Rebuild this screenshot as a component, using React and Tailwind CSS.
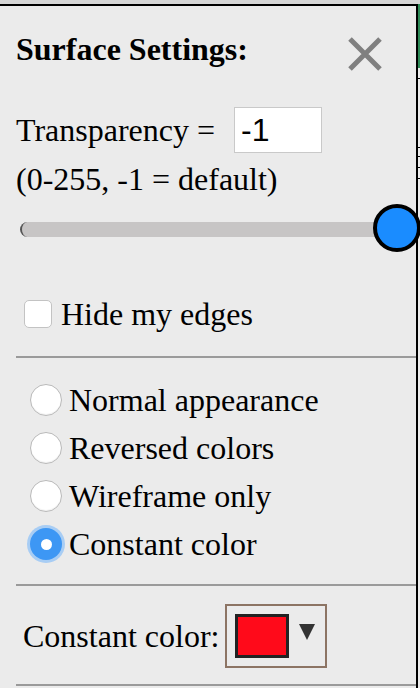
import React, { useState } from 'react';

const serif = { fontFamily: '"Liberation Serif", "Times New Roman", serif' };

const Radio = ({ label, checked, onChange }) => (
  <label className="flex h-[48px] items-center cursor-pointer">
    {checked ? (
      <span className="ml-[11px] flex h-[38px] w-[38px] items-center justify-center rounded-full bg-[#a8cdf4]">
        <span className="flex h-[32px] w-[32px] items-center justify-center rounded-full bg-[#3d97f4]">
          <span className="h-[11px] w-[11px] rounded-full bg-white" />
        </span>
      </span>
    ) : (
      <span className="ml-[14px] mr-[3px] h-[32px] w-[32px] rounded-full border border-[#b9b9b9] bg-white shadow-[inset_0_-1px_1px_rgba(0,0,0,0.06)]" />
    )}
    <input type="radio" className="hidden" checked={checked} onChange={onChange} />
    <span className="ml-[4px] text-[32px] leading-[48px] text-black">{label}</span>
  </label>
);

export default function App() {
  const [mode, setMode] = useState('constant');
  const [hideEdges, setHideEdges] = useState(false);
  const modes = [
    ['normal', 'Normal appearance'],
    ['reversed', 'Reversed colors'],
    ['wireframe', 'Wireframe only'],
    ['constant', 'Constant color'],
  ];

  return (
    <div className="w-[420px] h-[688px] overflow-hidden bg-[#d6d6d6] flex flex-col" style={serif}>
      <div className="h-[4px] shrink-0" />
      <div className="flex flex-1">
        {/* panel */}
        <div className="w-[418px] border-t-2 border-r-2 border-black bg-[#ebebeb] pl-[16px] flex flex-col">
          <div className="mt-[23px] flex h-[40px] items-start justify-between pr-[33px]">
            <h1 className="text-[32px] font-bold leading-[40px] text-black">Surface Settings:</h1>
            <svg width="36" height="36" viewBox="0 0 36 36" className="mt-[7px]">
              <path d="M3 3 L33 33 M33 3 L3 33" stroke="#808080" strokeWidth="5" />
            </svg>
          </div>

          <div className="mt-[38px] flex h-[46px] items-center">
            <span className="text-[32px] leading-[40px] text-black">Transparency =</span>
            <input
              defaultValue="-1"
              className="ml-[19px] h-[46px] w-[88px] border border-[#c9c9c9] bg-white pl-[6px] text-[32px] text-black outline-none"
              style={{ fontFamily: '"Liberation Sans", Arial, sans-serif' }}
            />
          </div>
          <p className="mt-[6px] text-[32px] leading-[40px] text-black">(0-255, -1 = default)</p>

          <div className="relative mt-[5px] ml-[4px] h-[48px] w-[377px]">
            <div className="absolute left-0 right-0 top-[18px] h-[15px] rounded-full border-l-2 border-[#555] bg-[#c7c5c5]" />
            <div className="absolute right-[-24px] top-0 h-[48px] w-[48px] rounded-full border-[4px] border-black bg-[#1a8cff]" />
          </div>

          <label className="mt-[42px] flex h-[40px] items-center cursor-pointer">
            <span
              onClick={() => setHideEdges(!hideEdges)}
              className="ml-[8px] h-[28px] w-[28px] rounded-[5px] border border-[#c3c3c3] bg-white"
            />
            <span className="ml-[9px] text-[32px] leading-[40px] text-black">Hide my edges</span>
          </label>

          <div className="mt-[22px] h-[2px] bg-[#9a9a9a]" />

          <div className="mt-[18px] flex flex-col">
            {modes.map(([key, label]) => (
              <Radio key={key} label={label} checked={mode === key} onChange={() => setMode(key)} />
            ))}
          </div>

          <div className="mt-[16px] h-[2px] bg-[#9a9a9a]" />

          <div className="mt-[18px] flex h-[64px] items-center">
            <span className="ml-[7px] text-[32px] leading-[40px] text-black">Constant color:</span>
            <div className="ml-[6px] flex h-[64px] w-[102px] items-start border-2 border-[#8c7464] pl-[8px] pt-[8px]">
              <div className="h-[44px] w-[54px] border-[3px] border-[#222] bg-[#ff0a1a]" />
              <svg width="16" height="16" viewBox="0 0 16 16" className="ml-[10px] mt-[10px]">
                <polygon points="0,0 16,0 8,16" fill="#333" />
              </svg>
            </div>
          </div>

          <div className="mt-[16px] h-[2px] bg-[#9a9a9a]" />
        </div>

        {/* sliver of the page behind */}
        <div className="flex w-[2px] flex-col bg-[#ececec]">
          <div className="h-[64px] bg-[#2e8b57]" />
          <div className="mt-[10px] h-[1px] bg-black" />
          <div className="mt-[68px] h-[1px] bg-black" />
          <div className="mt-[8px] h-[1px] bg-black" />
          <div className="mt-[10px] h-[1px] bg-black" />
          <div className="mt-[10px] h-[1px] bg-black" />
        </div>
      </div>
    </div>
  );
}
